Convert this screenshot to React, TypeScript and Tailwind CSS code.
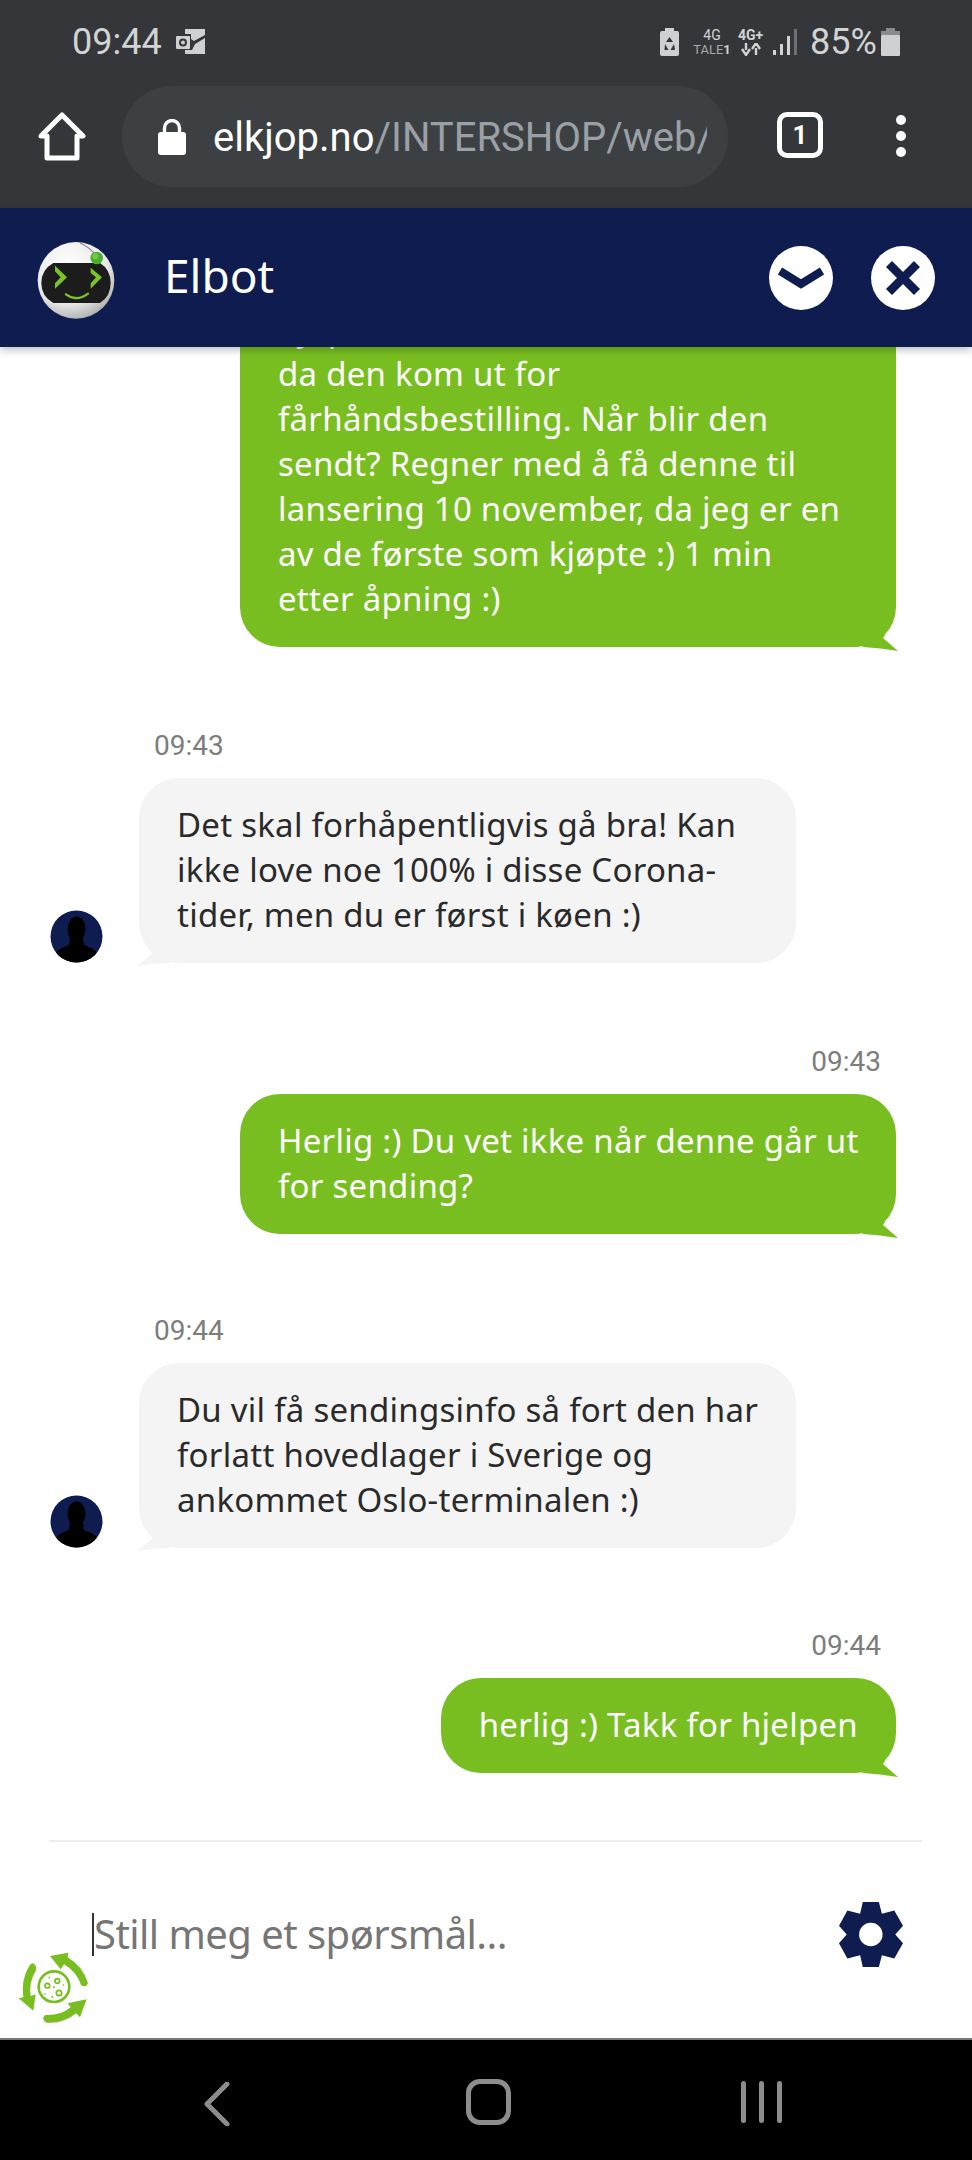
import React from "react";

const plex = "font-['Noto_Sans','Liberation_Sans',sans-serif]";
const roboto = "font-['Roboto','Liberation_Sans',sans-serif]";

function Time({ t, right }: { t: string; right?: boolean }) {
  return (
    <div
      className={`${roboto} h-[36px] leading-[36px] text-[28px] text-[#7d7d7d] mb-[14px] ${
        right ? "text-right pr-[91px]" : "pl-[154px]"
      }`}
    >
      {t}
    </div>
  );
}

function Sent({ lines, clip }: { lines: string[]; clip?: boolean }) {
  return (
    <div className="flex justify-end pr-[76px]">
      <div className={`relative bg-[#78be20] text-white rounded-[40px] px-[38px] pt-[24px] pb-[26px] ${clip ? "w-[656px]" : ""}`}>
        {lines.map((l) => (
          <div key={l} className={`${plex} text-[33px] leading-[45px] whitespace-nowrap tracking-[0.25px]`}>
            {l}
          </div>
        ))}
        <svg className="absolute right-[-4px] bottom-[-5px]" width="40" height="20" viewBox="0 0 40 20">
          <path d="M3 15 L0 0 L25 3 L23 6 L38 19 Q20 16 3 15 Z" fill="#78be20" />
        </svg>
      </div>
    </div>
  );
}

function Received({ lines }: { lines: string[] }) {
  return (
    <div className="flex items-end pl-[50px]">
      <svg width="53" height="53" viewBox="0 0 53 53" className="shrink-0">
        <circle cx="26.5" cy="26.5" r="26" fill="#0f1c50" />
        <clipPath id="av">
          <circle cx="26.5" cy="26.5" r="26" />
        </clipPath>
        <g clipPath="url(#av)" fill="#000">
          <ellipse cx="26.5" cy="19" rx="9" ry="12.5" />
          <path d="M20 28 L33 28 L34 35 Q44 38 48 44 L48 53 L5 53 L5 44 Q9 38 19 35 Z" />
        </g>
      </svg>
      <div className="relative ml-[36px] w-[657px] bg-[#f4f4f4] text-[#2a2a2a] rounded-[40px] px-[38px] pt-[24px] pb-[26px]">
        {lines.map((l) => (
          <div key={l} className={`${plex} text-[33px] leading-[45px] whitespace-nowrap tracking-[0.25px]`}>
            {l}
          </div>
        ))}
        <svg className="absolute left-[-4px] bottom-[-5px]" width="40" height="22" viewBox="0 0 40 22">
          <path d="M17 8 L2 20 Q18 17 35 17 L35 0 L20 3 Z" fill="#f4f4f4" />
        </svg>
      </div>
    </div>
  );
}

function Robot() {
  return (
    <svg width="120" height="110" viewBox="0 0 360 330" className="shrink-0">
      <defs>
        <radialGradient id="hd" cx="0.4" cy="0.3" r="0.85">
          <stop offset="0" stopColor="#ffffff" />
          <stop offset="0.6" stopColor="#e8e8e8" />
          <stop offset="1" stopColor="#8f8f8f" />
        </radialGradient>
      </defs>
      <circle cx="168" cy="172" r="115" fill="url(#hd)" />
      <path d="M180 60 Q215 75 232 105" stroke="#8a8a8a" strokeWidth="4" fill="none" />
      <path d="M100 120 L240 120 Q272 140 272 180 Q272 220 240 240 L100 240 Q64 220 64 180 Q64 140 100 120 Z" fill="#1c1c1c" />
      <path d="M105 128 L141 163 L105 197 L105 181 L122 163 L105 145 Z" fill="#7bc425" />
      <path d="M212 134 L246 163 L212 197 L212 181 L228 163 L212 150 Z" fill="#7bc425" />
      <path d="M138 214 Q170 238 204 212" stroke="#7bc425" strokeWidth="7" fill="none" strokeLinecap="round" />
      <circle cx="230" cy="105" r="19" fill="#4caf2e" />
      <circle cx="226" cy="100" r="9" fill="#6fcb45" />
    </svg>
  );
}

function Recycle() {
  return (
    <svg width="120" height="110" viewBox="0 0 360 330" className="absolute left-0 top-[90px]">
      <g fill="#78be20">
        <path d="M150 78 L205 68 L203 82 Q250 110 264 160 Q258 175 243 165 Q230 125 192 103 L182 118 Z" />
        <path d="M100 100 Q112 108 107 122 Q85 160 92 198 L107 193 L100 242 L56 205 L70 202 Q62 150 88 107 Q93 100 100 100 Z" />
        <path d="M260 208 L240 262 L228 250 Q190 282 140 278 Q122 268 135 255 Q180 258 212 232 L203 220 Z" />
      </g>
      <circle cx="162" cy="170" r="46" fill="none" stroke="#78be20" strokeWidth="8" />
      <g fill="none" stroke="#78be20" strokeWidth="5">
        <circle cx="142" cy="167" r="7" />
        <circle cx="172" cy="153" r="7" />
        <circle cx="177" cy="189" r="8" />
      </g>
      <g fill="#78be20">
        <circle cx="162" cy="172" r="3" />
        <circle cx="157" cy="201" r="3" />
        <circle cx="148" cy="143" r="2.5" />
        <circle cx="190" cy="165" r="2.5" />
        <circle cx="135" cy="192" r="2.5" />
      </g>
    </svg>
  );
}

function StatusBar() {
  return (
    <div className={`${roboto} flex items-center justify-between h-[84px] pl-[72px] pr-[72px] text-[#d2d3d4]`}>
      <div className="flex items-center gap-[14px]">
        <span className="text-[36px] leading-none">09:44</span>
        <svg width="30" height="26" viewBox="0 0 30 26">
          <path d="M9 0 L29 0 L29 6 L18 12 L15 10 L15 5 L9 5 Z" fill="#cfd0d1" />
          <path d="M29 9 L29 25 L9 25 L9 21 L16 21 L19 15 Z" fill="#cfd0d1" />
          <rect x="0" y="7" width="14" height="13" rx="1" fill="#cfd0d1" />
          <circle cx="7" cy="13.5" r="3" fill="none" stroke="#35363a" strokeWidth="2" />
        </svg>
      </div>
      <div className="flex items-center">
        <svg width="19" height="28" viewBox="0 0 19 28">
          <rect x="5" y="0" width="9" height="4" fill="#cfd0d1" />
          <rect x="0" y="3" width="19" height="25" rx="2" fill="#cfd0d1" />
          <path d="M9.5 9 L13 14 L6 14 Z M5 16 L8.5 22 L4.5 22 Z M14 16 L15 22 L10.5 22 Z" fill="#35363a" />
        </svg>
        <div className="ml-[14px] w-[38px] flex flex-col items-center leading-none">
          <span className="text-[14px] leading-[15px] h-[15px]">4G</span>
          <span className="text-[13px] leading-[13px] h-[13px] text-[#a8a9aa]">
            TALE<b className="text-[#d2d3d4]">1</b>
          </span>
        </div>
        <div className="ml-[6px] w-[27px] flex flex-col items-center leading-none">
          <span className="text-[14px] leading-[13px] h-[13px] font-bold">4G+</span>
          <svg width="22" height="13" viewBox="0 0 22 13" className="mt-[1px]">
            <path d="M6 0 L6 7 M2 6 L6 12 L10 6 M16 12 L16 5 M12 6 L16 0 L20 6" stroke="#d2d3d4" strokeWidth="2.4" fill="none" />
          </svg>
        </div>
        <svg width="26" height="28" viewBox="0 0 26 28" className="ml-[9px]">
          <rect x="0" y="22" width="3" height="5" fill="#d2d3d4" />
          <rect x="7" y="16" width="3" height="11" fill="#d2d3d4" />
          <rect x="14" y="8" width="3" height="19" fill="#d2d3d4" />
          <rect x="21" y="1" width="3" height="26" fill="#6e6f71" />
        </svg>
        <span className="ml-[11px] text-[36px] leading-none w-[66px]">85%</span>
        <svg width="19" height="28" viewBox="0 0 19 28" className="ml-[5px]">
          <rect x="5" y="0" width="9" height="4" fill="#8b8c8d" />
          <rect x="0" y="3" width="19" height="4" fill="#8b8c8d" />
          <rect x="0" y="7" width="19" height="21" rx="1" fill="#cfd0d1" />
        </svg>
      </div>
    </div>
  );
}

function UrlBar() {
  return (
    <div className="flex items-start h-[124px]">
      <svg width="50" height="50" viewBox="0 0 50 50" className="ml-[37px] mt-[28px] shrink-0">
        <path d="M25 3 L46 24 L40 24 L40 46 L10 46 L10 24 L4 24 Z" fill="none" stroke="#fff" strokeWidth="5" strokeLinejoin="round" />
      </svg>
      <div className={`${roboto} ml-[35px] mt-[2px] w-[606px] h-[101px] rounded-[50px] bg-[#3c4043] flex items-center pl-[36px]`}>
        <svg width="28" height="36" viewBox="0 0 28 36" className="shrink-0">
          <rect x="0" y="13" width="28" height="23" rx="3" fill="#fff" />
          <path d="M6.5 14 L6.5 9 A7.5 7.5 0 0 1 21.5 9 L21.5 14" fill="none" stroke="#fff" strokeWidth="3.4" />
        </svg>
        <div className="ml-[27px] mt-[3px] w-[494px] overflow-hidden whitespace-nowrap text-[40px] leading-[50px]">
          <span className="text-white">elkjop.no</span>
          <span className="text-[#9aa0a6]">/INTERSHOP/web/WFS</span>
        </div>
      </div>
      <div className={`${roboto} ml-[49px] mt-[28px] w-[46px] h-[46px] border-[5px] border-white rounded-[10px] flex items-center justify-center text-white text-[26px] font-bold leading-none shrink-0`}>
        1
      </div>
      <div className="ml-[73px] mt-[31px] flex flex-col gap-[6px] shrink-0">
        <div className="w-[10px] h-[10px] rounded-full bg-white" />
        <div className="w-[10px] h-[10px] rounded-full bg-white" />
        <div className="w-[10px] h-[10px] rounded-full bg-white" />
      </div>
    </div>
  );
}

function Header() {
  return (
    <div className="relative z-10 flex items-center h-[139px] bg-[#0f1c50] shadow-[0_3px_8px_rgba(0,0,0,0.25)] pl-[20px]">
      <Robot />
      <span className={`${plex} ml-[24px] mb-[5px] text-[46px] leading-none text-white`}>Elbot</span>
      <div className="ml-auto flex items-center gap-[38px] pr-[37px]">
        <svg width="64" height="64" viewBox="0 0 64 64">
          <circle cx="32" cy="32" r="32" fill="#fff" />
          <path d="M11 25 L32 38 L53 25" fill="none" stroke="#0f1c50" strokeWidth="8" />
        </svg>
        <svg width="64" height="64" viewBox="0 0 64 64">
          <circle cx="32" cy="32" r="32" fill="#fff" />
          <path d="M18 18 L46 46 M46 18 L18 46" fill="none" stroke="#0f1c50" strokeWidth="8.5" />
        </svg>
      </div>
    </div>
  );
}

export default function App() {
  return (
    <div className="w-[972px] h-[2160px] flex flex-col bg-white overflow-hidden">
      <div className="bg-[#35363a] h-[208px] shrink-0">
        <StatusBar />
        <UrlBar />
      </div>
      <Header />
      <div className="flex-1 min-h-0 overflow-hidden flex flex-col justify-end pb-[67px]">
        <Sent
          clip
          lines={[
            "Kjøpte denne rett som det,",
            "da den kom ut for",
            "fårhåndsbestilling. Når blir den",
            "sendt? Regner med å få denne til",
            "lansering 10 november, da jeg er en",
            "av de første som kjøpte :) 1 min",
            "etter åpning :)",
          ]}
        />
        <div className="mt-[81px]">
          <Time t="09:43" />
          <Received
            lines={[
              "Det skal forhåpentligvis gå bra! Kan",
              "ikke love noe 100% i disse Corona-",
              "tider, men du er først i køen :)",
            ]}
          />
        </div>
        <div className="mt-[81px]">
          <Time t="09:43" right />
          <Sent clip lines={["Herlig :) Du vet ikke når denne går ut", "for sending?"]} />
        </div>
        <div className="mt-[79px]">
          <Time t="09:44" />
          <Received
            lines={[
              "Du vil få sendingsinfo så fort den har",
              "forlatt hovedlager i Sverige og",
              "ankommet Oslo-terminalen :)",
            ]}
          />
        </div>
        <div className="mt-[80px]">
          <Time t="09:44" right />
          <Sent lines={["herlig :) Takk for hjelpen"]} />
        </div>
      </div>
      <div className="relative h-[198px] shrink-0 bg-white">
        <div className="mx-[50px] h-[2px] bg-[#eeeeee]" />
        <div className="flex items-center h-[126px] pl-[92px] pr-[68px] mt-[29px]">
          <div className="w-[2px] h-[43px] bg-[#333]" />
          <span className={`${plex} text-[40px] leading-none text-[#767676] tracking-[-0.55px]`}>Still meg et spørsmål...</span>
          <svg width="66" height="67" viewBox="54 34 197 200" className="ml-auto">
            <path
              fillRule="evenodd"
              d="M128 37 L176 37 L185 72 L222 62 L248 108 L225 134 L248 160 L222 206 L185 196 L176 231 L128 231 L120 196 L82 206 L57 160 L80 134 L57 108 L82 62 L120 72 Z M152 99 A35 35 0 1 0 152 169 A35 35 0 1 0 152 99 Z"
              fill="#0f1c50"
            />
          </svg>
        </div>
        <Recycle />
      </div>
      <div className="h-[122px] shrink-0 bg-black border-t-[2px] border-[#777] flex items-start">
        <svg width="28" height="44" viewBox="0 0 28 44" className="ml-[203px] mt-[42px]">
          <path d="M24 2 L4 22 L24 42" fill="none" stroke="#8d8d8d" strokeWidth="5" strokeLinecap="round" strokeLinejoin="round" />
        </svg>
        <div className="ml-[235px] mt-[39px] w-[45px] h-[46px] rounded-[14px] border-[5px] border-[#8d8d8d]" />
        <div className="ml-[230px] mt-[41px] flex gap-[13px]">
          <div className="w-[5px] h-[42px] rounded-full bg-[#8d8d8d]" />
          <div className="w-[5px] h-[42px] rounded-full bg-[#8d8d8d]" />
          <div className="w-[5px] h-[42px] rounded-full bg-[#8d8d8d]" />
        </div>
      </div>
    </div>
  );
}
